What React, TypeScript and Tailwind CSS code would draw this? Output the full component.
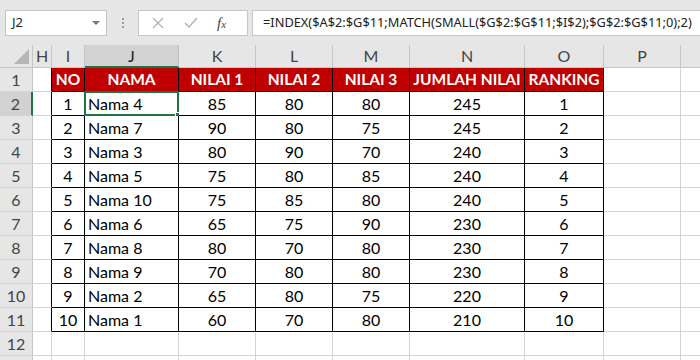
import React from "react";

const cols = [
  { name: "H", w: 19 },
  { name: "I", w: 33 },
  { name: "J", w: 94 },
  { name: "K", w: 77 },
  { name: "L", w: 77 },
  { name: "M", w: 77 },
  { name: "N", w: 115 },
  { name: "O", w: 79 },
  { name: "P", w: 77 },
  { name: "Q", w: 60 },
];

const headers = ["NO", "NAMA", "NILAI 1", "NILAI 2", "NILAI 3", "JUMLAH NILAI", "RANKING"];

const rows: (string | number)[][] = [
  [1, "Nama 4", 85, 80, 80, 245, 1],
  [2, "Nama 7", 90, 80, 75, 245, 2],
  [3, "Nama 3", 80, 90, 70, 240, 3],
  [4, "Nama 5", 75, 80, 85, 240, 4],
  [5, "Nama 10", 75, 85, 80, 240, 5],
  [6, "Nama 6", 65, 75, 90, 230, 6],
  [7, "Nama 8", 80, 70, 80, 230, 7],
  [8, "Nama 9", 70, 80, 80, 230, 8],
  [9, "Nama 2", 65, 80, 75, 220, 9],
  [10, "Nama 1", 60, 70, 80, 210, 10],
];

// table occupies cols 1..7, rows 1..11
const inTable = (c: number, r: number) => c >= 1 && c <= 7 && r >= 1 && r <= 11;

function Cell({ c, r }: { c: number; r: number }) {
  const right = inTable(c, r) || inTable(c + 1, r) ? "border-r-black" : "border-r-[#d4d4d4]";
  const bottom = inTable(c, r) || inTable(c, r + 1) ? "border-b-black" : "border-b-[#d4d4d4]";
  let content: React.ReactNode = null;
  let bg = "bg-white";
  let align = "justify-center";
  if (inTable(c, r)) {
    if (r === 1) {
      bg = "bg-[#c00000]";
      content = <span className="text-[15.5px] font-bold text-white">{headers[c - 1]}</span>;
    } else {
      content = rows[r - 2][c - 1];
      if (c === 2) align = "justify-start pl-[3px]";
    }
  }
  return (
    <div
      className={`relative flex h-[24px] shrink-0 items-center border-r border-b ${right} ${bottom} ${bg} ${align}`}
      style={{ width: cols[c].w }}
    >
      {content}
      {c === 2 && r === 2 && (
        <div className="pointer-events-none absolute -top-[1px] -left-[1px] h-[25px] w-[95px] border-2 border-[#217346]">
          <div className="absolute -right-[4px] -bottom-[4px] h-[6px] w-[6px] border border-white bg-[#217346]" />
        </div>
      )}
    </div>
  );
}

export default function App() {
  return (
    <div className="h-[360px] w-[700px] overflow-hidden bg-[#e6e6e6] font-['Lato',sans-serif] text-[16px] text-black">
      {/* formula bar */}
      <div className="flex h-[45px] items-start pt-[10px] pl-[5px] font-['Noto_Sans',sans-serif] text-[12.8px]">
        <div className="flex h-[26px] w-[102px] items-center justify-between border border-[#c6c6c6] bg-white pr-[6px] pl-[6px] text-[13px] text-[#222]">
          <span>J2</span>
          <span className="h-0 w-0 border-x-[4px] border-t-[4px] border-x-transparent border-t-[#777]" />
        </div>
        <div className="flex w-[31px] flex-col items-center gap-[2px] pt-[8px]">
          <span className="h-[2px] w-[2px] bg-[#9a9a9a]" />
          <span className="h-[2px] w-[2px] bg-[#9a9a9a]" />
          <span className="h-[2px] w-[2px] bg-[#9a9a9a]" />
        </div>
        <div className="flex h-[26px] w-[110px] items-center border border-[#c6c6c6] bg-white">
          <svg width="12" height="12" viewBox="0 0 12 12" className="ml-[13px]">
            <path d="M1 1 L11 11 M11 1 L1 11" stroke="#b3b3b3" strokeWidth="1.3" />
          </svg>
          <svg width="14" height="12" viewBox="0 0 14 12" className="ml-[20px]">
            <path d="M1 6 L5 10 L13 1" stroke="#b3b3b3" strokeWidth="1.5" fill="none" />
          </svg>
          <span className="ml-[19px] font-['Liberation_Serif',serif] text-[15px] text-[#444] italic">
            f<span className="text-[11px]">x</span>
          </span>
        </div>
        <div className="ml-[4px] flex h-[26px] flex-1 items-center overflow-hidden border border-r-0 border-[#c6c6c6] bg-white pl-[10px] whitespace-nowrap text-[#222]">
          =INDEX($A$2:$G$11;MATCH(SMALL($G$2:$G$11;$I$2);$G$2:$G$11;0);2)
        </div>
      </div>

      {/* column headers */}
      <div className="flex h-[23px] bg-[#e6e6e6] text-[#444]">
        <div className="relative h-full w-[33px] shrink-0 border-r border-b border-[#c6c6c6]">
          <div
            className="absolute right-[3px] bottom-[3px] h-0 w-0"
            style={{ borderRight: "15px solid #b6b6b6", borderTop: "15px solid transparent" }}
          />
        </div>
        {cols.map((col) => (
          <div
            key={col.name}
            className={`flex h-full shrink-0 items-center justify-center border-r ${
              col.name === "J"
                ? "border-r-[#bdbdbd] border-b-2 border-b-[#217346] bg-[#d2d2d2] text-[#222]"
                : "border-r-[#c6c6c6] border-b border-b-[#c6c6c6]"
            }`}
            style={{ width: col.w }}
          >
            {col.name === "Q" ? "" : col.name}
          </div>
        ))}
      </div>

      {/* rows */}
      {Array.from({ length: 12 }, (_, i) => i + 1).map((r) => (
        <div key={r} className="flex">
          <div
            className={`flex h-[24px] w-[33px] shrink-0 items-center justify-center border-b border-[#d4d4d4] text-[#444] ${
              r === 2 ? "border-r-2 border-r-[#217346] bg-[#d2d2d2]" : "border-r border-r-[#c6c6c6] bg-[#e6e6e6]"
            }`}
          >
            {r}
          </div>
          {cols.map((_, c) => (
            <Cell key={c} c={c} r={r} />
          ))}
        </div>
      ))}
      <div className="flex h-[24px]">
        <div className="h-full w-[33px] shrink-0 border-r border-[#c6c6c6] bg-[#e6e6e6]" />
        {cols.map((col) => (
          <div key={col.name} className="h-full shrink-0 border-r border-[#d4d4d4] bg-white" style={{ width: col.w }} />
        ))}
      </div>
    </div>
  );
}
